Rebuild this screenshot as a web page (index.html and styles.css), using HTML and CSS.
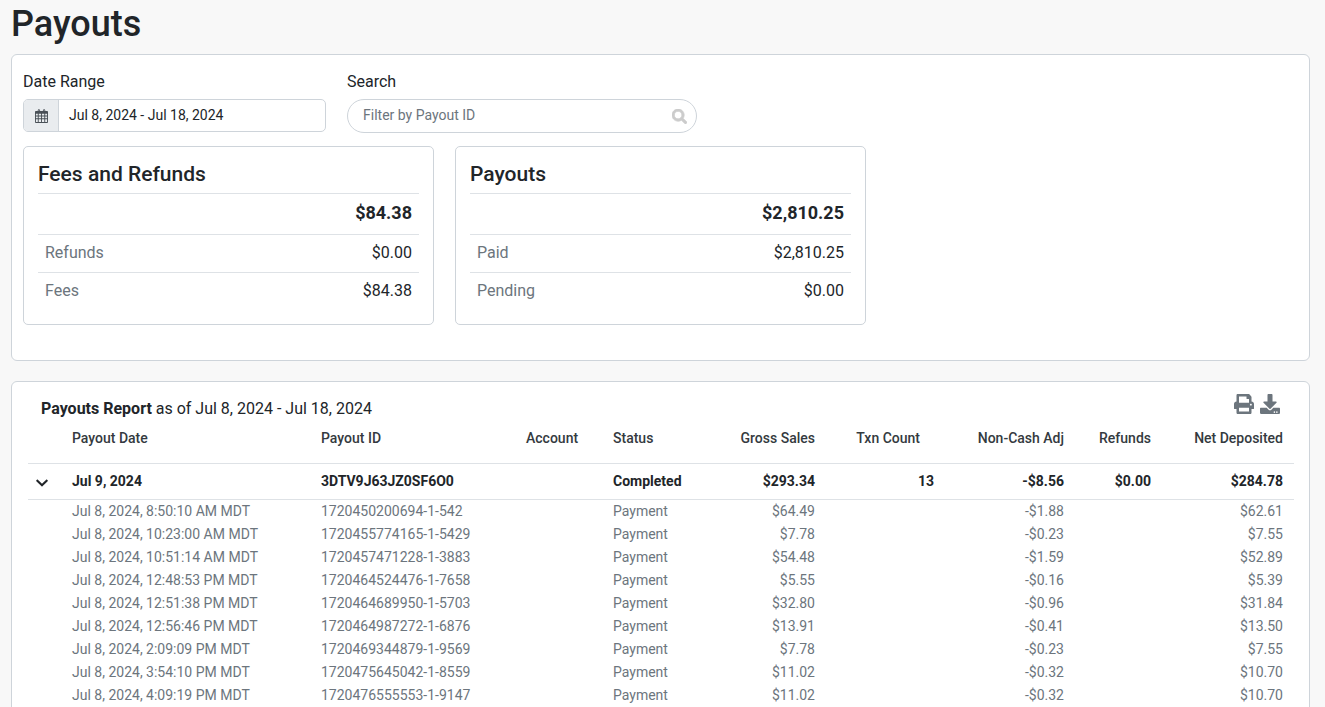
FILE: index.html
```html
<!DOCTYPE html>
<html lang="en">
<head>
  <meta charset="UTF-8">
  <title>Payouts</title>
  <link rel="stylesheet" href="styles.css">
</head>
<body>

  <h1>Payouts</h1>

  <!-- FILTERS + SUMMARY -->
  <section class="card filters">
    <div class="filter-row">
      <div class="field date-field">
        <label>Date Range</label>
        <div class="date-input">
          <span class="date-addon">
            <svg class="cal-icon" viewBox="0 0 14 15">
              <path fill="none" stroke="#495057" stroke-width="1" d="M3.500 3V1.200a.7.7 0 0 1 1.400 0V3M9.100 3V1.200a.7.7 0 0 1 1.400 0V3"/>
              <path fill-rule="evenodd" d="M1 2h12a1 1 0 0 1 1 1V14a1 1 0 0 1-1 1H1a1 1 0 0 1-1-1V3a1 1 0 0 1 1-1zM1 5v2h2V5zm3 0v2h2.500V5zm3.500 0v2H10V5zM11 5v2h2V5zM1 8v2h2V8zm3 0v2h2.500V8zm3.500 0v2H10V8zM11 8v2h2V8zM1 11v3h2v-3zm3 0v3h2.500v-3zm3.500 0v3H10v-3zm3.500 0v3h2v-3z"/>
            </svg>
          </span>
          <span class="date-value">Jul 8, 2024 - Jul 18, 2024</span>
        </div>
      </div>
      <div class="field search-field">
        <label>Search</label>
        <div class="search-input">
          <input placeholder="Filter by Payout ID">
          <svg class="search-icon" viewBox="0 0 512 512"><path d="M505 442.7L405.3 343c-4.500-4.500-10.600-7-17-7H372c27.600-35.300 44-79.700 44-128C416 93.100 322.900 0 208 0S0 93.100 0 208s93.100 208 208 208c48.300 0 92.700-16.400 128-44v16.300c0 6.400 2.500 12.500 7 17l99.700 99.700c9.400 9.400 24.600 9.400 33.900 0l28.300-28.300c9.400-9.400 9.400-24.600.1-34zM208 336c-70.700 0-128-57.200-128-128 0-70.700 57.200-128 128-128 70.700 0 128 57.200 128 128 0 70.700-57.200 128-128 128z"/></svg>
        </div>
      </div>
    </div>

    <div class="summary-row">
      <div class="summary">
        <h2>Fees and Refunds</h2>
        <div class="summary-total">$84.38</div>
        <div class="summary-line"><span>Refunds</span><b>$0.00</b></div>
        <div class="summary-line"><span>Fees</span><b>$84.38</b></div>
      </div>
      <div class="summary">
        <h2>Payouts</h2>
        <div class="summary-total">$2,810.25</div>
        <div class="summary-line"><span>Paid</span><b>$2,810.25</b></div>
        <div class="summary-line"><span>Pending</span><b>$0.00</b></div>
      </div>
    </div>
  </section>

  <!-- REPORT TABLE -->
  <section class="card report">
    <div class="report-head">
      <div class="report-title"><strong>Payouts Report</strong> as of Jul 8, 2024 - Jul 18, 2024</div>
      <div class="report-tools">
        <svg class="print-icon" viewBox="0 0 512 512"><path d="M448 192V77.250c0-8.490-3.370-16.620-9.370-22.630L393.370 9.370c-6-6-14.140-9.370-22.630-9.370H96C78.330 0 64 14.330 64 32v160c-35.350 0-64 28.650-64 64v112c0 8.840 7.160 16 16 16h48v96c0 17.670 14.330 32 32 32h320c17.670 0 32-14.330 32-32v-96h48c8.840 0 16-7.160 16-16V256c0-35.350-28.650-64-64-64zm-64 256H128v-96h256v96zm0-224H128V64h192v48c0 8.840 7.160 16 16 16h48v96zm48 72c-13.250 0-24-10.750-24-24 0-13.260 10.750-24 24-24s24 10.740 24 24c0 13.250-10.750 24-24 24z"/></svg>
        <svg class="download-icon" viewBox="0 0 512 512"><path d="M216 0h80c13.300 0 24 10.700 24 24v168h87.700c17.800 0 26.700 21.500 14.100 34.100L269.700 378.300c-7.500 7.500-19.800 7.500-27.300 0L90.100 226.100c-12.600-12.600-3.700-34.100 14.100-34.100H192V24c0-13.300 10.700-24 24-24zm296 376v112c0 13.300-10.700 24-24 24H24c-13.300 0-24-10.700-24-24V376c0-13.300 10.700-24 24-24h146.700l49 49c20.100 20.100 52.500 20.100 72.600 0l49-49H488c13.300 0 24 10.700 24 24zm-124 88c0-11-9-20-20-20s-20 9-20 20 9 20 20 20 20-9 20-20zm64 0c0-11-9-20-20-20s-20 9-20 20 9 20 20 20 20-9 20-20z"/></svg>
      </div>
    </div>

    <div class="row row-header">
      <span></span>
      <span>Payout Date</span><span>Payout ID</span><span>Account</span><span>Status</span>
      <span class="num">Gross Sales</span><span class="num txn-head">Txn Count</span>
      <span class="num">Non-Cash Adj</span><span class="num">Refunds</span><span class="num">Net Deposited</span>
    </div>

    <div class="row row-group">
      <span class="chevron-cell"><svg class="chevron" viewBox="0 0 448 512"><path d="M207.029 381.476L12.686 187.132c-9.373-9.373-9.373-24.569 0-33.941l22.667-22.667c9.357-9.357 24.522-9.375 33.901-.04L224 284.505l154.745-154.021c9.379-9.335 24.544-9.317 33.901.04l22.667 22.667c9.373 9.373 9.373 24.569 0 33.941L240.971 381.476c-9.373 9.372-24.569 9.372-33.942 0z"/></svg></span>
      <span>Jul 9, 2024</span><span>3DTV9J63JZ0SF6O0</span><span></span><span>Completed</span>
      <span class="num">$293.34</span><span class="num">13</span><span class="num">-$8.56</span><span class="num">$0.00</span><span class="num">$284.78</span>
    </div>

    <div class="details">
      <div class="row row-detail"><span></span><span>Jul 8, 2024, 8:50:10 AM MDT</span><span>1720450200694-1-542</span><span></span><span>Payment</span><span class="num">$64.49</span><span></span><span class="num">-$1.88</span><span></span><span class="num">$62.61</span></div>
      <div class="row row-detail"><span></span><span>Jul 8, 2024, 10:23:00 AM MDT</span><span>1720455774165-1-5429</span><span></span><span>Payment</span><span class="num">$7.78</span><span></span><span class="num">-$0.23</span><span></span><span class="num">$7.55</span></div>
      <div class="row row-detail"><span></span><span>Jul 8, 2024, 10:51:14 AM MDT</span><span>1720457471228-1-3883</span><span></span><span>Payment</span><span class="num">$54.48</span><span></span><span class="num">-$1.59</span><span></span><span class="num">$52.89</span></div>
      <div class="row row-detail"><span></span><span>Jul 8, 2024, 12:48:53 PM MDT</span><span>1720464524476-1-7658</span><span></span><span>Payment</span><span class="num">$5.55</span><span></span><span class="num">-$0.16</span><span></span><span class="num">$5.39</span></div>
      <div class="row row-detail"><span></span><span>Jul 8, 2024, 12:51:38 PM MDT</span><span>1720464689950-1-5703</span><span></span><span>Payment</span><span class="num">$32.80</span><span></span><span class="num">-$0.96</span><span></span><span class="num">$31.84</span></div>
      <div class="row row-detail"><span></span><span>Jul 8, 2024, 12:56:46 PM MDT</span><span>1720464987272-1-6876</span><span></span><span>Payment</span><span class="num">$13.91</span><span></span><span class="num">-$0.41</span><span></span><span class="num">$13.50</span></div>
      <div class="row row-detail"><span></span><span>Jul 8, 2024, 2:09:09 PM MDT</span><span>1720469344879-1-9569</span><span></span><span>Payment</span><span class="num">$7.78</span><span></span><span class="num">-$0.23</span><span></span><span class="num">$7.55</span></div>
      <div class="row row-detail"><span></span><span>Jul 8, 2024, 3:54:10 PM MDT</span><span>1720475645042-1-8559</span><span></span><span>Payment</span><span class="num">$11.02</span><span></span><span class="num">-$0.32</span><span></span><span class="num">$10.70</span></div>
      <div class="row row-detail"><span></span><span>Jul 8, 2024, 4:09:19 PM MDT</span><span>1720476555553-1-9147</span><span></span><span>Payment</span><span class="num">$11.02</span><span></span><span class="num">-$0.32</span><span></span><span class="num">$10.70</span></div>
    </div>
  </section>

</body>
</html>
```

FILE: styles.css
```css
html { height:100%; overflow:hidden; }
body { margin:0; padding:0 15px 0 11px; background:#f8f8f8; color:#212529;
       font-family:Roboto,sans-serif; font-size:14px; }

h1 { margin:0; height:54px; font-size:36px; font-weight:500; line-height:48px; }

.card {
  background:#fff; border:1px solid #ced4da; border-radius:6px;
}

/* Filters + summary */
.filters { height:307px; padding:16px 11px 0; box-sizing:border-box; margin-bottom:20px; }
.filter-row { display:flex; gap:21px; }
.field label { display:block; font-size:16px; line-height:21px; margin-bottom:7px; }
.date-field { width:303px; }
.search-field { width:350px; }
.date-input {
  display:flex; height:33px; box-sizing:border-box; border:1px solid #ced4da;
  border-radius:5px; overflow:hidden;
}
.date-addon {
  width:34px; background:#e9ecef; border-right:1px solid #ced4da;
  display:flex; align-items:center; justify-content:center;
}
.cal-icon { width:13px; height:14px; fill:#495057; }
.date-value { padding-left:10px; line-height:31px; color:#212529; }
.search-input {
  display:flex; align-items:center; height:34px; box-sizing:border-box;
  border:1px solid #ced4da; border-radius:17px; padding:0 9px 0 15px;
}
.search-input input {
  flex:1; border:none; outline:none; padding:0 0 2px; min-width:0;
  font:14px Roboto,sans-serif; color:#495057;
}
.search-input input::placeholder { color:#6c757d; opacity:1; }
.search-icon { width:15px; height:15px; fill:#ccc; stroke:#ccc; stroke-width:24; }

.summary-row { display:flex; gap:21px; margin-top:13px; }
.summary {
  width:411px; height:179px; box-sizing:border-box; padding:0 14px;
  border:1px solid #ced4da; border-radius:5px;
}
.summary h2 {
  margin:0; height:46px; font-size:21px; font-weight:500; line-height:55px;
  border-bottom:1px solid #dee2e6;
}
.summary-total {
  height:40px; line-height:38px; padding-right:7px; text-align:right;
  font-size:18px; font-weight:700; border-bottom:1px solid #dee2e6;
}
.summary-line {
  display:flex; justify-content:space-between; height:37px; line-height:36px;
  padding:0 7px; font-size:16px; color:#6c757d;
}
.summary-line + .summary-line { border-top:1px solid #dee2e6; }
.summary-line b { font-weight:400; color:#212529; }

/* Report */
.report { padding:0 15px 0 16px; height:400px; }
.report-head { position:relative; height:46px; }
.report-title { padding:16px 0 0 13px; font-size:16px; line-height:21px; }
.report-title strong { font-weight:700; }
.report-tools {
  position:absolute; top:12px; right:14px; display:flex; gap:6px;
}
.print-icon, .download-icon { width:20px; height:20px; fill:#6c757d; }

.row {
  display:grid; padding-right:11px;
  grid-template-columns:44px 249px 205px 87px 100px 102px 119px 130px 87px 132px;
}
.num { text-align:right; }
.row-header { height:35px; align-items:start; line-height:20px; font-weight:500; color:#343a40; }
.txn-head { padding-right:14px; }
.row-group {
  height:35px; line-height:34px; font-weight:700; color:#212529;
  border-top:1px solid #dee2e6; border-bottom:1px solid #dee2e6;
}
.chevron-cell { display:flex; align-items:center; padding:3px 0 0 8px; box-sizing:border-box; }
.chevron { width:12px; height:14px; fill:#212529; }
.row-detail { height:23px; line-height:23px; color:#6c757d; }
```
